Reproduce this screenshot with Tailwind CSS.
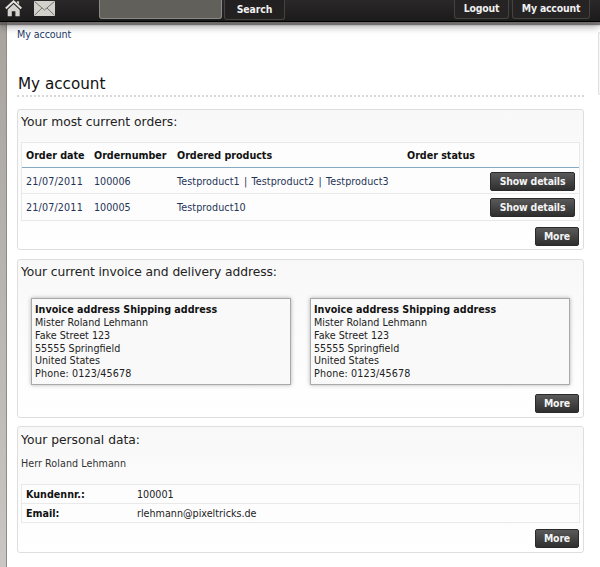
<!DOCTYPE html>
<html lang="en">
<head>
<meta charset="utf-8">
<title>My account</title>
<script src="https://cdn.jsdelivr.net/npm/@tailwindcss/browser@4"></script>
</head>
<body class="h-[567px] w-[600px] overflow-hidden bg-white font-['DejaVu_Sans',Verdana,sans-serif] text-[9.6px] leading-[13px] text-[#333]">
<div class="relative flex h-[567px] w-[600px] flex-col">
  <header class="relative z-10 flex h-[22px] shrink-0 items-start border-b border-black bg-linear-to-b from-[#2a2829] to-[#1c1b1c] shadow-[0_3px_1px_rgba(90,84,84,0.75),0_4px_8px_rgba(0,0,0,0.4)]">
    <svg class="ml-[5px] h-[17px] w-[17px] shrink-0" viewBox="0 0 17 17">
      <path d="M2.700 9v7.200h4.100v-5h3.600v5H14.700V9L8.600 3.600z" fill="#d5d3cd"/>
      <path d="M11.800 1.300h2.300v4h-2.300z" fill="#d5d3cd"/>
      <path d="M.8 9 8.600 1.800 16.300 9" fill="none" stroke="#292728" stroke-width="3.400"/>
      <path d="M.8 8.400 8.600 1.300 16.300 8.400" fill="none" stroke="#e6e4df" stroke-width="2"/>
    </svg>
    <svg class="ml-[12px] mt-px h-[15px] w-[21px] shrink-0" viewBox="0 0 21 15">
      <rect width="21" height="15" fill="#d3d1cb"/>
      <path d="M.5.500 10.500 9 20.500.500M.5 14.300 8 7M20.500 14.300 13 7" fill="none" stroke="#77736d" stroke-width="1"/>
    </svg>
    <div class="ml-[44px] h-[19px] w-[123px] shrink-0 rounded-b-[3px] border border-t-0 border-[#8b8984] bg-[#62605b]"></div>
    <div class="ml-[2px] flex h-[20px] w-[61px] shrink-0 justify-center rounded-b-[3px] border border-t-0 border-[#454341] bg-[#222021] pt-[3px] font-['DejaVu_Sans_Condensed','DejaVu_Sans',sans-serif] text-[10.400px] font-bold tracking-[-0.100px] text-[#f0f0f0]">Search</div>
    <div class="ml-[169px] flex h-[19px] w-[55px] shrink-0 justify-center rounded-b-[3px] border border-t-0 border-[#454341] bg-[#252324] pt-[2px] font-['DejaVu_Sans_Condensed','DejaVu_Sans',sans-serif] text-[10.400px] font-bold tracking-[-0.180px] text-[#f0f0f0]">Logout</div>
    <div class="ml-[3px] flex h-[19px] w-[78px] shrink-0 justify-center rounded-b-[3px] border border-t-0 border-[#454341] bg-[#252324] pt-[2px] font-['DejaVu_Sans_Condensed','DejaVu_Sans',sans-serif] text-[10.400px] font-bold tracking-[-0.180px] whitespace-nowrap text-[#f0f0f0]">My account</div>
  </header>
  <div class="flex min-h-0 flex-1">
    <div class="w-[7px] shrink-0 border-r border-[#8d8b88] bg-linear-to-b from-[#a8a39d] to-[#c9c7c3]"></div>
    <main class="ml-[10px] w-[567px] shrink-0">
      <nav class="pt-[6px] tracking-[-0.100px] text-[#1c3a66]"><span>My account</span></nav>
      <h1 class="mt-[33px] h-[23px] border-b-2 border-dotted border-[#d8d8d8] pl-px text-[15.200px] leading-[20px] text-[#111]">My account</h1>

      <section class="mt-[12px] h-[141px] rounded-[3px] border border-[#dedede] bg-linear-to-b from-[#f8f8f8] to-white px-[3px]">
        <h2 class="h-[32px] pt-[4px] text-[12.300px] leading-[16px] text-[#222]">Your most current orders:</h2>
        <div class="h-[79px] border border-[#e9e9e9] bg-[#fdfdfd]">
          <div class="flex h-[25px] items-center border-b border-[#86a9c4] pl-[4px] pt-[1px] font-bold tracking-[-0.030px] text-[#111]"><span class="w-[68px]">Order date</span><span class="w-[83px]">Ordernumber</span><span class="w-[230px]">Ordered products</span><span>Order status</span></div>
          <div class="flex h-[26px] items-center border-b border-[#e9e9e9] pl-[4px] pr-[4px] pt-px text-[#1f3457]"><span class="w-[68px] tracking-[0.160px]">21/07/2011</span><span class="w-[83px]">100006</span><span class="tracking-[0.060px] whitespace-nowrap">Testproduct1<span class="mx-[1.200px]"> | </span>Testproduct2<span class="mx-[1.200px]"> | </span>Testproduct3</span><span class="ml-auto flex h-[19px] w-[85px] justify-center rounded-[2px] border border-[#2a2a2a] bg-linear-to-b from-[#5a5a5a] to-[#2f2f2f] pt-[2px] font-['DejaVu_Sans_Condensed','DejaVu_Sans',sans-serif] text-[10.400px] font-bold tracking-[-0.150px] whitespace-nowrap text-[#f4f4f4]">Show details</span></div>
          <div class="flex h-[26px] items-center pl-[4px] pr-[4px] pt-px text-[#1f3457]"><span class="w-[68px] tracking-[0.160px]">21/07/2011</span><span class="w-[83px]">100005</span><span class="tracking-[0.060px]">Testproduct10</span><span class="ml-auto flex h-[19px] w-[85px] justify-center rounded-[2px] border border-[#2a2a2a] bg-linear-to-b from-[#5a5a5a] to-[#2f2f2f] pt-[2px] font-['DejaVu_Sans_Condensed','DejaVu_Sans',sans-serif] text-[10.400px] font-bold tracking-[-0.150px] whitespace-nowrap text-[#f4f4f4]">Show details</span></div>
        </div>
        <div class="mt-[6px] mr-px ml-auto flex h-[19px] w-[44px] justify-center rounded-[2px] border border-[#2a2a2a] bg-linear-to-b from-[#5a5a5a] to-[#2f2f2f] pt-[2px] font-['DejaVu_Sans_Condensed','DejaVu_Sans',sans-serif] text-[10.400px] font-bold tracking-[-0.150px] text-[#f4f4f4]">More</div>
      </section>

      <section class="mt-[9px] h-[159px] rounded-[3px] border border-[#dedede] bg-linear-to-b from-[#f8f8f8] to-white px-[3px]">
        <h2 class="h-[38px] pt-[4px] text-[12.300px] leading-[16px] tracking-[-0.070px] text-[#222]">Your current invoice and delivery address:</h2>
        <div class="flex gap-[19px] pl-[10px] text-[#222]">
          <div class="h-[87px] w-[260px] border border-[#a9a9a9] bg-[#f9f9f9] pl-[3px] pt-[5px] leading-[12.850px] shadow-[0_0_4px_rgba(0,0,0,0.3)]"><b class="text-[#111]">Invoice address Shipping address</b><p>Mister Roland Lehmann</p><p>Fake Street 123</p><p>55555 Springfield</p><p>United States</p><p class="tracking-[0.140px]">Phone: 0123/45678</p></div>
          <div class="h-[87px] w-[260px] border border-[#a9a9a9] bg-[#f9f9f9] pl-[3px] pt-[5px] leading-[12.850px] shadow-[0_0_4px_rgba(0,0,0,0.3)]"><b class="text-[#111]">Invoice address Shipping address</b><p>Mister Roland Lehmann</p><p>Fake Street 123</p><p>55555 Springfield</p><p>United States</p><p class="tracking-[0.140px]">Phone: 0123/45678</p></div>
        </div>
        <div class="mt-[9px] mr-px ml-auto flex h-[19px] w-[44px] justify-center rounded-[2px] border border-[#2a2a2a] bg-linear-to-b from-[#5a5a5a] to-[#2f2f2f] pt-[2px] font-['DejaVu_Sans_Condensed','DejaVu_Sans',sans-serif] text-[10.400px] font-bold tracking-[-0.150px] text-[#f4f4f4]">More</div>
      </section>

      <section class="mt-[8px] h-[127px] rounded-[3px] border border-[#dedede] bg-linear-to-b from-[#f8f8f8] to-white px-[3px]">
        <h2 class="h-[30px] pt-[5px] text-[12.300px] leading-[16px] text-[#222]">Your personal data:</h2>
        <p class="h-[27px] tracking-[0.040px]">Herr Roland Lehmann</p>
        <div class="h-[39px] border border-[#e9e9e9] bg-[#fdfdfd] text-[#222]">
          <div class="flex h-[19px] items-center border-b border-[#e9e9e9] pl-[4px]"><b class="w-[111px] text-[#111]">Kundennr.:</b><span>100001</span></div>
          <div class="flex h-[18px] items-center pl-[4px]"><b class="w-[111px] text-[#111]">Email:</b><span>rlehmann@pixeltricks.de</span></div>
        </div>
        <div class="mt-[6px] mr-px ml-auto flex h-[19px] w-[44px] justify-center rounded-[2px] border border-[#2a2a2a] bg-linear-to-b from-[#5a5a5a] to-[#2f2f2f] pt-[2px] font-['DejaVu_Sans_Condensed','DejaVu_Sans',sans-serif] text-[10.400px] font-bold tracking-[-0.150px] text-[#f4f4f4]">More</div>
      </section>
    </main>
    <aside class="mt-[10px] ml-auto h-[63px] w-[2px] rounded-l-[2px] border border-r-0 border-[#dedede] bg-[#f8f8f8]"></aside>
  </div>
</div>
</body>
</html>
